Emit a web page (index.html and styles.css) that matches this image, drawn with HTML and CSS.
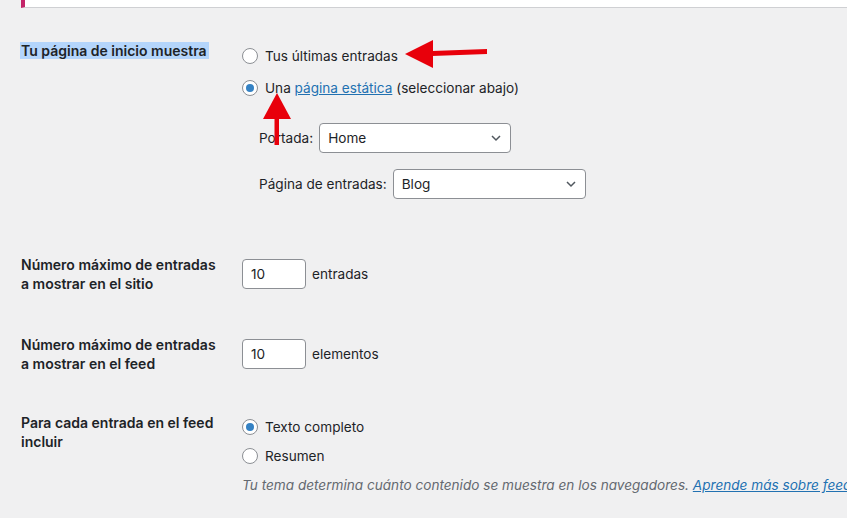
FILE: index.html
```html
<!DOCTYPE html>
<html lang="es">
<head>
    <meta charset="UTF-8">
    <meta name="viewport" content="width=device-width, initial-scale=1.0">
    <title>Ajustes de lectura</title>
    <link rel="stylesheet" href="styles.css">
</head>
<body>
    <div class="notice"></div>

    <div class="form-table">
        <!-- Página de inicio -->
        <div class="row row-front">
            <div class="label"><span class="selected">Tu página de inicio muestra</span></div>
            <div class="field">
                <label class="radio"><span class="circle"></span>Tus últimas entradas</label>
                <label class="radio second"><span class="circle checked"></span>Una&nbsp;<a href="#">página estática</a>&nbsp;(seleccionar abajo)</label>
                <ul class="pages">
                    <li>
                        <span>Portada:</span>
                        <div class="select select-home">Home
                            <svg class="chevron" width="14" height="14" viewBox="0 0 14 14"><path d="M3 5l4 4 4-4" fill="none" stroke="#50575e" stroke-width="1.5"/></svg>
                        </div>
                    </li>
                    <li>
                        <span>Página de entradas:</span>
                        <div class="select select-blog">Blog
                            <svg class="chevron" width="14" height="14" viewBox="0 0 14 14"><path d="M3 5l4 4 4-4" fill="none" stroke="#50575e" stroke-width="1.5"/></svg>
                        </div>
                    </li>
                </ul>
            </div>
        </div>

        <!-- Entradas en el sitio -->
        <div class="row row-site">
            <div class="label">Número máximo de entradas a mostrar en el sitio</div>
            <div class="field inline">
                <div class="number">10</div>
                <span>entradas</span>
            </div>
        </div>

        <!-- Entradas en el feed -->
        <div class="row">
            <div class="label">Número máximo de entradas a mostrar en el feed</div>
            <div class="field inline">
                <div class="number">10</div>
                <span>elementos</span>
            </div>
        </div>

        <!-- Contenido del feed -->
        <div class="row row-feed">
            <div class="label">Para cada entrada en el feed incluir</div>
            <div class="field">
                <label class="radio"><span class="circle checked"></span>Texto completo</label>
                <label class="radio summary"><span class="circle"></span>Resumen</label>
                <p class="description">Tu tema determina cuánto contenido se muestra en los navegadores. <a href="#">Aprende más sobre feeds</a></p>
            </div>
        </div>
    </div>

    <!-- Flechas de anotación -->
    <svg class="arrow arrow-left" width="90" height="32" viewBox="0 0 90 32">
        <polygon points="0,14 28,0 28,28" fill="#e8000b"/>
        <polygon points="27,11 82,9 82,14 27,16" fill="#e8000b"/>
    </svg>
    <svg class="arrow arrow-up" width="30" height="56" viewBox="0 0 30 56">
        <polygon points="15,0 29,26 1,26" fill="#e8000b"/>
        <rect x="12.5" y="25" width="4.5" height="27" fill="#e8000b"/>
    </svg>
</body>
</html>
```

FILE: styles.css
```css
html {
    overflow: hidden;
}

body {
    margin: 0;
    padding: 0 0 0 21px;
    background-color: #f0f0f1;
    color: #1d2327;
    font-family: Inter, "Noto Sans", sans-serif;
    font-size: 13.6px;
    line-height: 19px;
    position: relative;
    height: 518px;
}

a {
    color: #2271b1;
    text-decoration: underline;
}

.notice {
    height: 7px;
    background-color: #ffffff;
    border-left: 4px solid #c42569;
    border-bottom: 1px solid #cfd0d3;
}

.row {
    display: grid;
    grid-template-columns: 221px 1fr;
    margin-top: 42px;
}

.row-front {
    margin-top: 33px;
}

.row-site {
    margin-top: 56px;
}

.label {
    font-weight: 600;
    font-size: 14px;
    width: 196px;
}

.selected {
    background-color: #b4d5fb;
    padding: 0 2px 0 1px;
    margin-left: -1px;
}

.field {
    padding-top: 5px;
    white-space: nowrap;
}

.field.inline {
    display: flex;
    align-items: center;
    align-self: start;
    gap: 6px;
    padding-top: 4px;
}

.radio {
    display: flex;
    align-items: center;
    height: 20px;
}

.radio.second {
    margin-top: 12px;
}

.circle {
    width: 14px;
    height: 14px;
    border: 1px solid #8c8f94;
    border-radius: 50%;
    background-color: #ffffff;
    margin-right: 7px;
    display: flex;
    align-items: center;
    justify-content: center;
    flex-shrink: 0;
}

.circle.checked::after {
    content: "";
    width: 8px;
    height: 8px;
    border-radius: 50%;
    background-color: #3582c4;
}

.pages {
    list-style: none;
    margin: 0;
    padding: 0 0 0 17px;
}

.pages li {
    display: flex;
    align-items: center;
    gap: 6px;
    margin-top: 16px;
}

.pages li:first-child {
    margin-top: 25px;
}

.select {
    position: relative;
    height: 28px;
    line-height: 28px;
    border: 1px solid #8c8f94;
    border-radius: 4px;
    background-color: #ffffff;
    padding: 0 8px;
    box-sizing: content-box;
}

.select-home {
    width: 174px;
}

.select-blog {
    width: 175px;
}

.chevron {
    position: absolute;
    right: 7px;
    top: 7px;
}

.number {
    width: 54px;
    height: 28px;
    line-height: 28px;
    border: 1px solid #8c8f94;
    border-radius: 4px;
    background-color: #ffffff;
    padding: 0 0 0 8px;
}

.row-feed {
    margin-top: 40px;
}

.row-feed .field {
    padding-top: 4px;
}

.radio.summary {
    margin-top: 9px;
}

.description {
    margin: 10px 0 0;
    color: #646970;
    font-style: italic;
}

.arrow {
    position: absolute;
}

.arrow-left {
    left: 405px;
    top: 40px;
}

.arrow-up {
    left: 262px;
    top: 93px;
}
```
